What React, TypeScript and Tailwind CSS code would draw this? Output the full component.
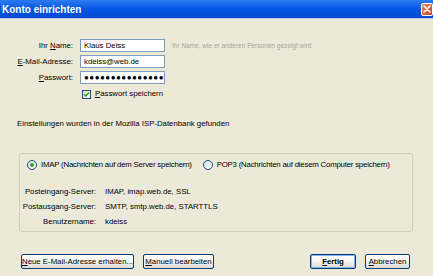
import React from 'react';

function Field({ label, ul, value, password }: { label: string; ul: number; value: string; password?: boolean }) {
  return (
    <div className="flex items-center h-[13px]">
      <label className="w-[73px] text-right shrink-0">
        {label.slice(0, ul)}
        <span className="underline">{label[ul]}</span>
        {label.slice(ul + 1)}
      </label>
      <div className="ml-[7px] w-[85px] h-[13px] bg-white border border-[#7F9DB9] flex items-center px-[3px] text-[#000]">
        {password ? <span className="text-[8px] tracking-[0.5px] leading-none">{value}</span> : value}
      </div>
    </div>
  );
}

function Radio({ checked, label }: { checked?: boolean; label: string }) {
  return (
    <div className="flex items-center gap-[4px]">
      <span className="w-[10px] h-[10px] rounded-full border border-[#1C5180] bg-gradient-to-br from-[#DCDCD7] to-white flex items-center justify-center">
        {checked && <span className="w-[4px] h-[4px] rounded-full bg-[#2FA52F]" />}
      </span>
      <span className="tracking-[-0.2px]">{label}</span>
    </div>
  );
}

function Btn({ children, w, def }: { children: React.ReactNode; w: string; def?: boolean }) {
  return (
    <button
      className={`${w} h-[15px] rounded-[2px] border border-[#003C74] bg-gradient-to-b from-white via-[#F4F4F0] to-[#DCDCD4] flex items-center justify-center ${def ? 'font-bold shadow-[inset_0_0_0_1px_#8CB4F2]' : ''}`}
    >
      {children}
    </button>
  );
}

export default function App() {
  return (
    <div className="w-[433px] h-[276px] bg-[#ECE9D8] flex flex-col text-[7.8px] text-[#000] overflow-hidden" style={{ fontFamily: '"Liberation Sans", Arial, sans-serif' }}>
      {/* title bar */}
      <div className="h-[19px] shrink-0 bg-gradient-to-b from-[#2C7BF2] via-[#0456E3] to-[#0049D0] flex items-center justify-between pl-[2px] border-b border-[#B9CDEF]">
        <span className="text-white font-bold text-[10px]">Konto einrichten</span>
        <span className="w-[12px] h-[13px] rounded-[2px] border border-white bg-gradient-to-br from-[#E9856B] to-[#C8401C] flex items-center justify-center">
          <svg width="8" height="8" viewBox="0 0 8 8">
            <path d="M1 1L7 7M7 1L1 7" stroke="white" strokeWidth="1.6" strokeLinecap="round" />
          </svg>
        </span>
      </div>

      {/* account fields */}
      <div className="mt-[20px] flex flex-col gap-[3px]">
        <div className="flex items-center">
          <Field label="Ihr Name:" ul={4} value="Klaus Deiss" />
          <span className="ml-[7px] text-[6.5px] text-[#A5A597]">Ihr Name, wie er anderen Personen gezeigt wird</span>
        </div>
        <Field label="E-Mail-Adresse:" ul={0} value="kdeiss@web.de" />
        <Field label="Passwort:" ul={0} value="●●●●●●●●●●●●●●●" password />
      </div>
      <div className="mt-[5px] ml-[82px] flex items-center gap-[4px] h-[10px]">
        <span className="w-[9px] h-[9px] border border-[#1C5180] bg-gradient-to-br from-[#DCDCD7] to-white flex items-center justify-center">
          <svg width="7" height="7" viewBox="0 0 7 7">
            <path d="M1 3.2L2.8 5L6 1.6" fill="none" stroke="#21A121" strokeWidth="1.5" />
          </svg>
        </span>
        <span>
          <span className="underline">P</span>asswort speichern
        </span>
      </div>

      <div className="mt-[20px] ml-[17px] h-[10px] flex items-center">Einstellungen wurden in der Mozilla ISP-Datenbank gefunden</div>

      {/* server settings */}
      <div className="mt-[24px] ml-[19px] w-[394px] h-[79px] border border-[#D0D0BF] rounded-[3px] flex flex-col pt-[6px]">
        <div className="flex items-center h-[10px] pl-[7px]">
          <Radio checked label="IMAP (Nachrichten auf dem Server speichern)" />
          <div className="ml-[11px]">
            <Radio label="POP3 (Nachrichten auf diesem Computer speichern)" />
          </div>
        </div>
        <div className="mt-[17px] grid grid-cols-[76px_1fr] gap-x-[9px] gap-y-[5px]">
          <span className="text-right h-[10px] flex items-center justify-end">Posteingang-Server:</span>
          <span className="h-[10px] flex items-center">IMAP, imap.web.de, SSL</span>
          <span className="text-right h-[10px] flex items-center justify-end">Postausgang-Server:</span>
          <span className="h-[10px] flex items-center">SMTP, smtp.web.de, STARTTLS</span>
          <span className="text-right h-[10px] flex items-center justify-end">Benutzername:</span>
          <span className="h-[10px] flex items-center">kdeiss</span>
        </div>
      </div>

      {/* buttons */}
      <div className="mt-[22px] flex items-center px-[21px]">
        <Btn w="w-[113px]">
          <span><span className="underline">N</span>eue E-Mail-Adresse erhalten...</span>
        </Btn>
        <div className="ml-[9px]">
          <Btn w="w-[71px]">
            <span><span className="underline">M</span>anuell bearbeiten</span>
          </Btn>
        </div>
        <div className="ml-auto flex gap-[9px] mr-[2px]">
          <Btn w="w-[46px]" def>
            <span><span className="underline">F</span>ertig</span>
          </Btn>
          <Btn w="w-[45px]">
            <span><span className="underline">A</span>bbrechen</span>
          </Btn>
        </div>
      </div>
    </div>
  );
}
